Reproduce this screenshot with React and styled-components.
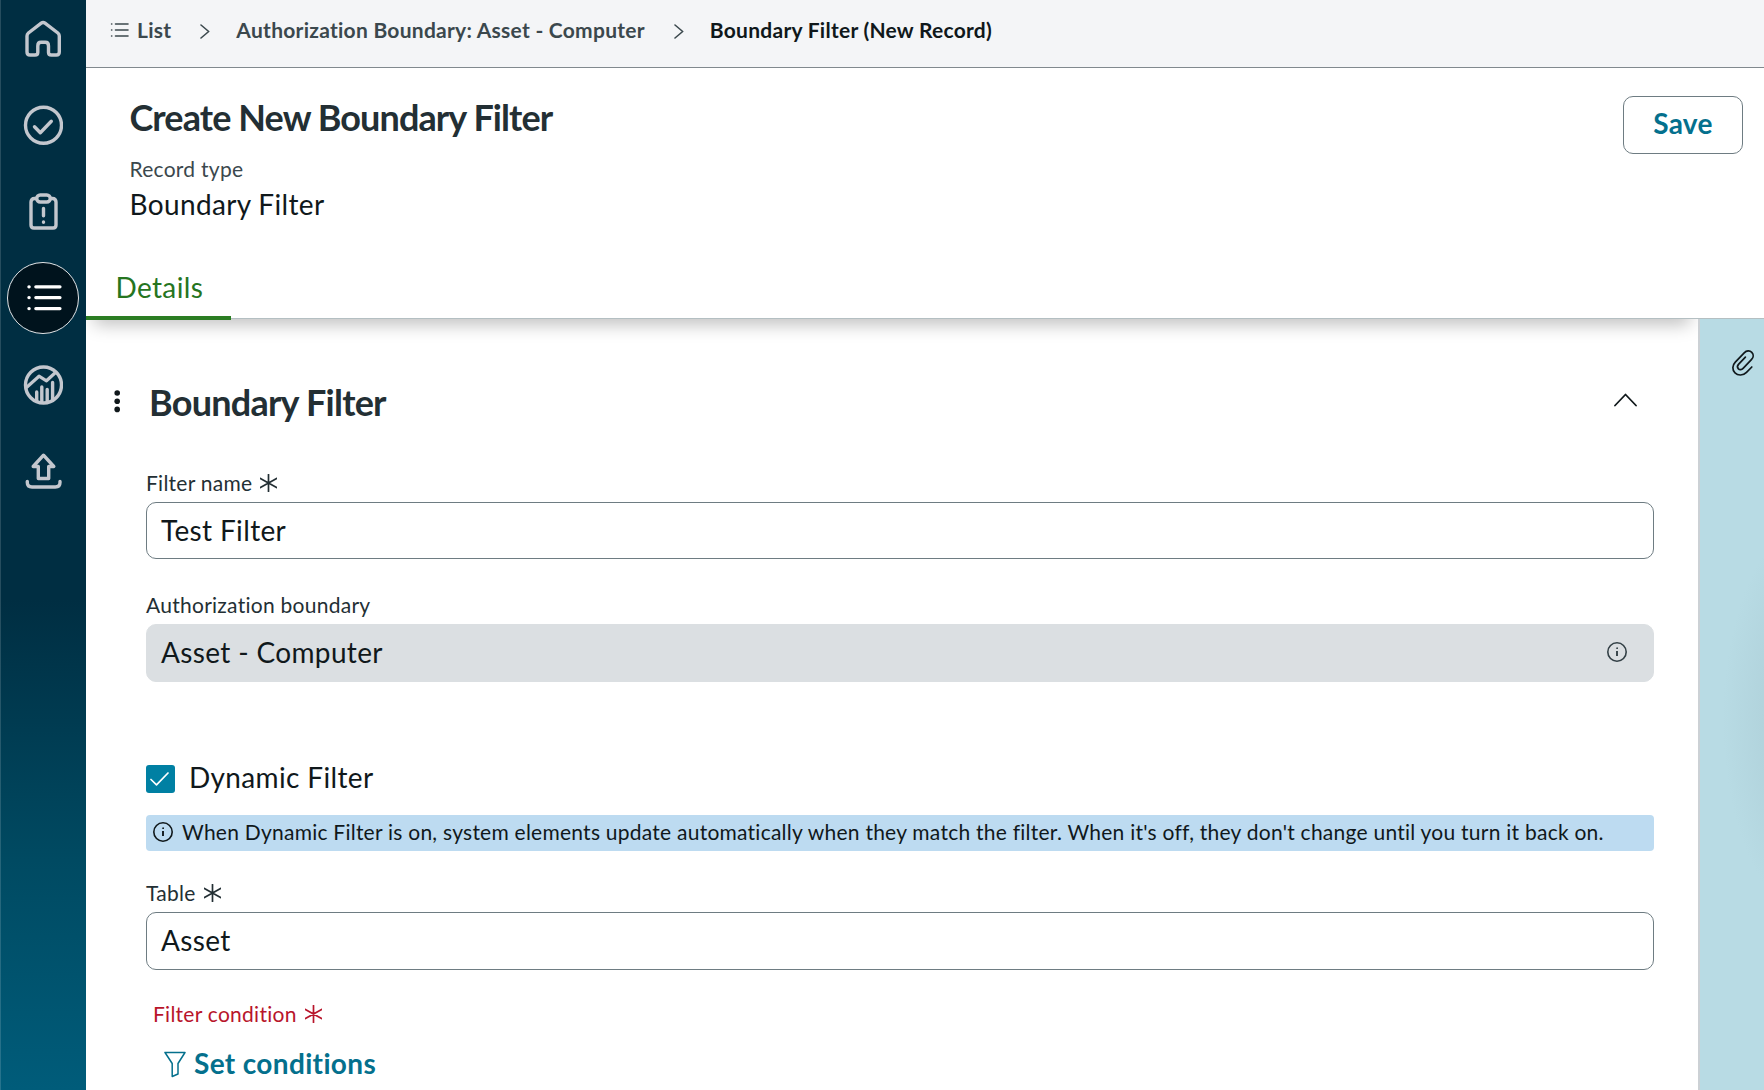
import React from "react";
import styled, { createGlobalStyle } from "styled-components";

const GlobalStyle = createGlobalStyle`
    * {
        box-sizing: border-box;
        letter-spacing: 0.0125em;
    }

    body {
        margin: 0;
        background-color: #fff;
        font-family: Lato, "Liberation Sans", sans-serif;
        color: #10181b;
        overflow: hidden;
    }

    h1, h2, p {
        margin: 0;
    }

    svg {
        display: block;
        flex: none;
        fill: none;
        stroke: currentColor;
        stroke-linecap: round;
        stroke-linejoin: round;
    }
`

const Page = styled.div`
    width: 100%;
    height: 100vh;
    display: flex;
    overflow: hidden;
`

const Sidebar = styled.nav`
    width: 86px;
    flex: none;
    display: flex;
    flex-direction: column;
    align-items: center;
    gap: 14.4px;
    padding: 3px 1px 0 0;
    border-left: 1px solid rgba(255, 255, 255, 0.15);
    background: linear-gradient(#002e42 0, #002e42 600px, #004a62 860px, #005c7a 1090px);
    background-origin: border-box;
`

const NavItem = styled.a`
    width: 72px;
    height: 72px;
    flex: none;
    display: flex;
    align-items: center;
    justify-content: center;
    border-radius: 50%;
    border: 1px solid ${props => props.$active ? "#e3e6e8" : "transparent"};
    background-color: ${props => props.$active ? "#00131d" : "transparent"};
    color: ${props => props.$active ? "#fff" : "#c3c7ce"};
`

const Main = styled.main`
    flex: 1;
    min-width: 0;
    display: flex;
    flex-direction: column;
`

const Breadcrumbs = styled.div`
    height: 68px;
    flex: none;
    display: flex;
    align-items: center;
    padding: 0 0 8px 24px;
    background-color: #f4f5f7;
    border-bottom: 1px solid #81898e;
    color: #3b484d;
`

const Crumb = styled.span`
    font-size: 21px;
    line-height: 26px;
    font-weight: 700;
    white-space: nowrap;
    color: ${props => props.$current ? "#10181b" : "inherit"};
    margin-left: ${props => props.$first ? "8px" : "0"};
`

const CrumbArrow = styled.svg`
    margin: 3px 26px 0 29px;
`

const Header = styled.header`
    height: 251px;
    flex: none;
    position: relative;
    z-index: 1;
    display: flex;
    flex-direction: column;
    justify-content: space-between;
    border-bottom: 1px solid #b4bfc2;
`

const HeaderTop = styled.div`
    display: flex;
    justify-content: space-between;
    align-items: flex-start;
    padding: 27px 21px 0 43.5px;
`

const Title = styled.h1`
    font-size: 36px;
    line-height: 44px;
    font-weight: 700;
    letter-spacing: -0.9px;
    color: #232f34;
`

const SectionTitle = styled(Title).attrs({ as: "h2" })`
    margin-left: 29px;
    flex: 1;
    letter-spacing: -0.75px;
`

const RecordLabel = styled.p`
    margin-top: 17px;
    font-size: 21px;
    line-height: 26px;
    color: #3b484d;
`

const RecordValue = styled.p`
    margin-top: 4px;
    font-size: 28px;
    line-height: 36px;
`

const SaveButton = styled.button`
    width: 120px;
    height: 58px;
    margin-top: 1px;
    padding: 0 0 5px;
    border: 1px solid #6e7c82;
    border-radius: 10px;
    background-color: #fff;
    color: #04708d;
    font: 700 28px Lato, sans-serif;
`

const Tab = styled.div`
    width: 145px;
    height: 64px;
    margin-bottom: -2px;
    padding: 13px 0 0 29.5px;
    border-bottom: 4px solid #2b7d23;
    font-size: 28px;
    line-height: 36px;
    color: #26751f;
`

const Body = styled.div`
    flex: 1;
    min-height: 0;
    display: flex;
`

const Form = styled.section`
    flex: 1;
    padding: 61px 44px 0 60px;
    background: #fff;
    position: relative;
`

/* soft shade the header casts on the form only */
const HeaderShade = styled.div`
    position: absolute;
    inset: 0 0 auto 0;
    height: 40px;
    overflow: hidden;

    &::before {
        content: "";
        display: block;
        height: 20px;
        margin: -20px 8px 0;
        box-shadow: 0 5px 18px rgba(0, 0, 0, 0.27);
    }
`

const SectionHeader = styled.div`
    display: flex;
    align-items: center;
    margin-left: -32px;
    padding-right: 17px;
    margin-bottom: 46px;
`

const Collapse = styled.svg`
    margin-bottom: 4px;
`

const Label = styled.label`
    display: flex;
    align-items: center;
    gap: 8px;
    font-size: 21px;
    line-height: 26px;
    margin: ${props => props.$margin || "0"};
    color: ${props => props.$error ? "#b8152b" : "#232f34"};
`

const Field = styled.div`
    height: ${props => props.$height || "58px"};
    margin-top: 6px;
    padding: 0 26px 2px 14px;
    display: flex;
    align-items: center;
    justify-content: space-between;
    border: 1px solid ${props => props.$disabled ? "#dbdfe2" : "#6e7c82"};
    border-radius: 10px;
    background-color: ${props => props.$disabled ? "#dbdfe2" : "#fff"};
    font-size: 28px;
    line-height: 34px;

    svg {
        color: #334046;
    }
`

const CheckRow = styled.div`
    display: flex;
    align-items: center;
    gap: 14px;
    height: 28px;
    margin-top: 83px;
    font-size: 28px;
    line-height: 28px;
`

const Checkbox = styled.span`
    width: 29px;
    height: 28px;
    display: flex;
    align-items: center;
    justify-content: center;
    padding: 0 2px 1px 0;
    border-radius: 3px;
    background-color: #0080a3;
    color: #fff;
`

const CheckLabel = styled.span`
    margin-top: -5px;
`

const Banner = styled.div`
    height: 36px;
    margin: 22px 0 29px;
    padding: 0 0 2px 7px;
    display: flex;
    align-items: center;
    gap: 9px;
    border-radius: 4px;
    background-color: #bddbf1;
    font-size: 21px;
    line-height: 26px;
    letter-spacing: 0.245px;
    white-space: nowrap;
`

const SetConditions = styled.button`
    display: flex;
    align-items: center;
    gap: 8px;
    margin: 18px 0 0 18px;
    padding: 0;
    border: 0;
    background: none;
    color: #04708d;
    font: 700 28px/36px Lato, sans-serif;
`

const FunnelIcon = styled.svg`
    margin-top: 2px;
`

const SidePanel = styled.aside`
    width: 66px;
    flex: none;
    padding: 30px 0 0 30.5px;
    border-left: 2px solid #ccd1d5;
    background: radial-gradient(ellipse 105px 210px at 128px 400px, #a9ccd6 0, #b1d3dc 58%, #b8dbe4 100%);
`

const Asterisk = () => (
    <svg width="17" height="18" viewBox="0 0 17 18" strokeWidth="1.7" strokeLinecap="butt">
        <path d="M8.5 .5v17M.4 4.4l16.2 9.2M.4 13.6l16.2-9.2" />
    </svg>
)

const Info = () => (
    <svg width="20" height="20" viewBox="0 0 20 20" strokeWidth="1.6">
        <circle cx="10" cy="10" r="9.2" />
        <path d="M10 9v5" strokeLinecap="butt" strokeWidth="1.9" />
        <circle cx="10" cy="6.2" r=".5" strokeWidth="1" />
    </svg>
)

const Chevron = () => (
    <CrumbArrow width="10" height="15" viewBox="0 0 10 15" strokeWidth="1.6">
        <path d="M1 1l7.7 6.5L1 14" />
    </CrumbArrow>
)

const NavSvg = ({ children }) => (
    <svg width="40" height="40" viewBox="0 0 40 40" strokeWidth="3.4">{children}</svg>
)

const navItems = [
    {
        name: "home",
        icon: <path d="M18.2 4.2L5.4 14Q4 15.2 4 17V33Q4 36 7 36H12Q14.8 36 14.8 33.5V27Q14.8 23.3 18 23.3H22.3Q25.5 23.3 25.5 27V33.5Q25.5 36 28.3 36H33.3Q36.3 36 36.3 33V17Q36.3 15.2 34.9 14L22 4.2Q20.1 2.8 18.2 4.2Z" />
    },
    {
        name: "approvals",
        icon: <><circle cx="20.5" cy="20.2" r="18" /><path d="M11.5 21.7l5.8 6L28.3 16.2" /></>
    },
    {
        name: "issues",
        icon: <>
            <path d="M13.5 6.5H11.5Q8 6.5 8 10V33Q8 36 11 36H30Q33 36 33 33V10Q33 6.5 29.5 6.5H27.5" />
            <rect x="13.7" y="3" width="13.6" height="7" rx="3.5" />
            <path d="M20.5 16.5v7.3M20.5 30v.2" />
        </>
    },
    {
        name: "lists",
        active: true,
        icon: <path d="M12.8 8.8H37M12.8 19.6H37M12.8 30.6H37M5.9 8.8h.3M5.9 19.6h.3M5.9 30.6h.3" strokeWidth="3.2" />
    },
    {
        name: "analytics",
        icon: <>
            <circle cx="20.5" cy="20" r="18" />
            <path d="M4 22L16 11.2L23.5 15.8L32.5 7.5" strokeWidth="3.2" />
            <path d="M13.7 27v9M18.8 22v15M24.2 24.5v12.5M29.6 17.5v17" />
        </>
    },
    {
        name: "upload",
        icon: <>
            <path d="M20.5 4.2L30.8 15.5H25.7V27.5H15.3V15.5H10.2Z" />
            <path d="M4.3 30.5V31.5Q4.3 36 9 36H32.3Q37 36 37 31.5V30.5" />
        </>
    },
]

const App = () => {
    return (
        <Page>
            <GlobalStyle />
            <Sidebar>
                {navItems.map(item => (
                    <NavItem key={item.name} $active={item.active}>
                        <NavSvg>{item.icon}</NavSvg>
                    </NavItem>
                ))}
            </Sidebar>
            <Main>
                <Breadcrumbs>
                    <svg width="19" height="16" viewBox="0 0 19 16" strokeWidth="1.6">
                        <path d="M5.5 2H18M5.5 8H18M5.5 14H18M1.6 2h.2M1.6 8h.2M1.6 14h.2" />
                    </svg>
                    <Crumb $first>List</Crumb>
                    <Chevron />
                    <Crumb>Authorization Boundary: Asset - Computer</Crumb>
                    <Chevron />
                    <Crumb $current>Boundary Filter (New Record)</Crumb>
                </Breadcrumbs>
                <Header>
                    <HeaderTop>
                        <div>
                            <Title>Create New Boundary Filter</Title>
                            <RecordLabel>Record type</RecordLabel>
                            <RecordValue>Boundary Filter</RecordValue>
                        </div>
                        <SaveButton>Save</SaveButton>
                    </HeaderTop>
                    <Tab>Details</Tab>
                </Header>
                <Body>
                    <Form>
                        <HeaderShade />
                        <SectionHeader>
                            <svg width="6" height="24" viewBox="0 0 6 24">
                                <g fill="#10181b" stroke="none">
                                    <circle cx="3.2" cy="3" r="2.8" />
                                    <circle cx="3.2" cy="11.3" r="2.8" />
                                    <circle cx="3.2" cy="19.4" r="2.8" />
                                </g>
                            </svg>
                            <SectionTitle>Boundary Filter</SectionTitle>
                            <Collapse width="23" height="14" viewBox="0 0 23 14" strokeWidth="1.8">
                                <path d="M1 12.5L11.5 1.5L22 12.5" />
                            </Collapse>
                        </SectionHeader>

                        <Label>Filter name <Asterisk /></Label>
                        <Field $height="57px">Test Filter</Field>

                        <Label $margin="33px 0 0">Authorization boundary</Label>
                        <Field $disabled>Asset - Computer <Info /></Field>

                        <CheckRow>
                            <Checkbox>
                                <svg width="19" height="14" viewBox="0 0 19 14" strokeWidth="1.7">
                                    <path d="M1 7.5L6.5 12.8L18 1" />
                                </svg>
                            </Checkbox>
                            <CheckLabel>Dynamic Filter</CheckLabel>
                        </CheckRow>
                        <Banner>
                            <Info />
                            When Dynamic Filter is on, system elements update automatically when they match the filter. When it's off, they don't change until you turn it back on.
                        </Banner>

                        <Label>Table <Asterisk /></Label>
                        <Field>Asset</Field>

                        <Label $error $margin="31px 0 0 7px">Filter condition <Asterisk /></Label>
                        <SetConditions>
                            <FunnelIcon width="22" height="27" viewBox="0 0 22 27" strokeWidth="1.5">
                                <path d="M1 1.5H21L14 12.5V23L8.2 25.5V12.5Z" />
                            </FunnelIcon>
                            Set conditions
                        </SetConditions>
                    </Form>
                    <SidePanel>
                        <svg width="24" height="28" viewBox="0 0 24 28" strokeWidth="1.7" color="#10181b">
                            <path d="M20.8 18L15.5 23.3C12 26.8 7 26.8 4 23.9C1 20.9 1.2 16.3 4.3 13.1L13.2 3.8C15.5 1.4 18.8 1.3 20.8 3.3C22.8 5.3 22.6 8.4 20.4 10.7L12.1 19.4C10.7 20.9 8.6 21 7.4 19.8C6.2 18.6 6.3 16.7 7.7 15.2L14.4 8.2" />
                        </svg>
                    </SidePanel>
                </Body>
            </Main>
        </Page>
    )
}

export default App;
